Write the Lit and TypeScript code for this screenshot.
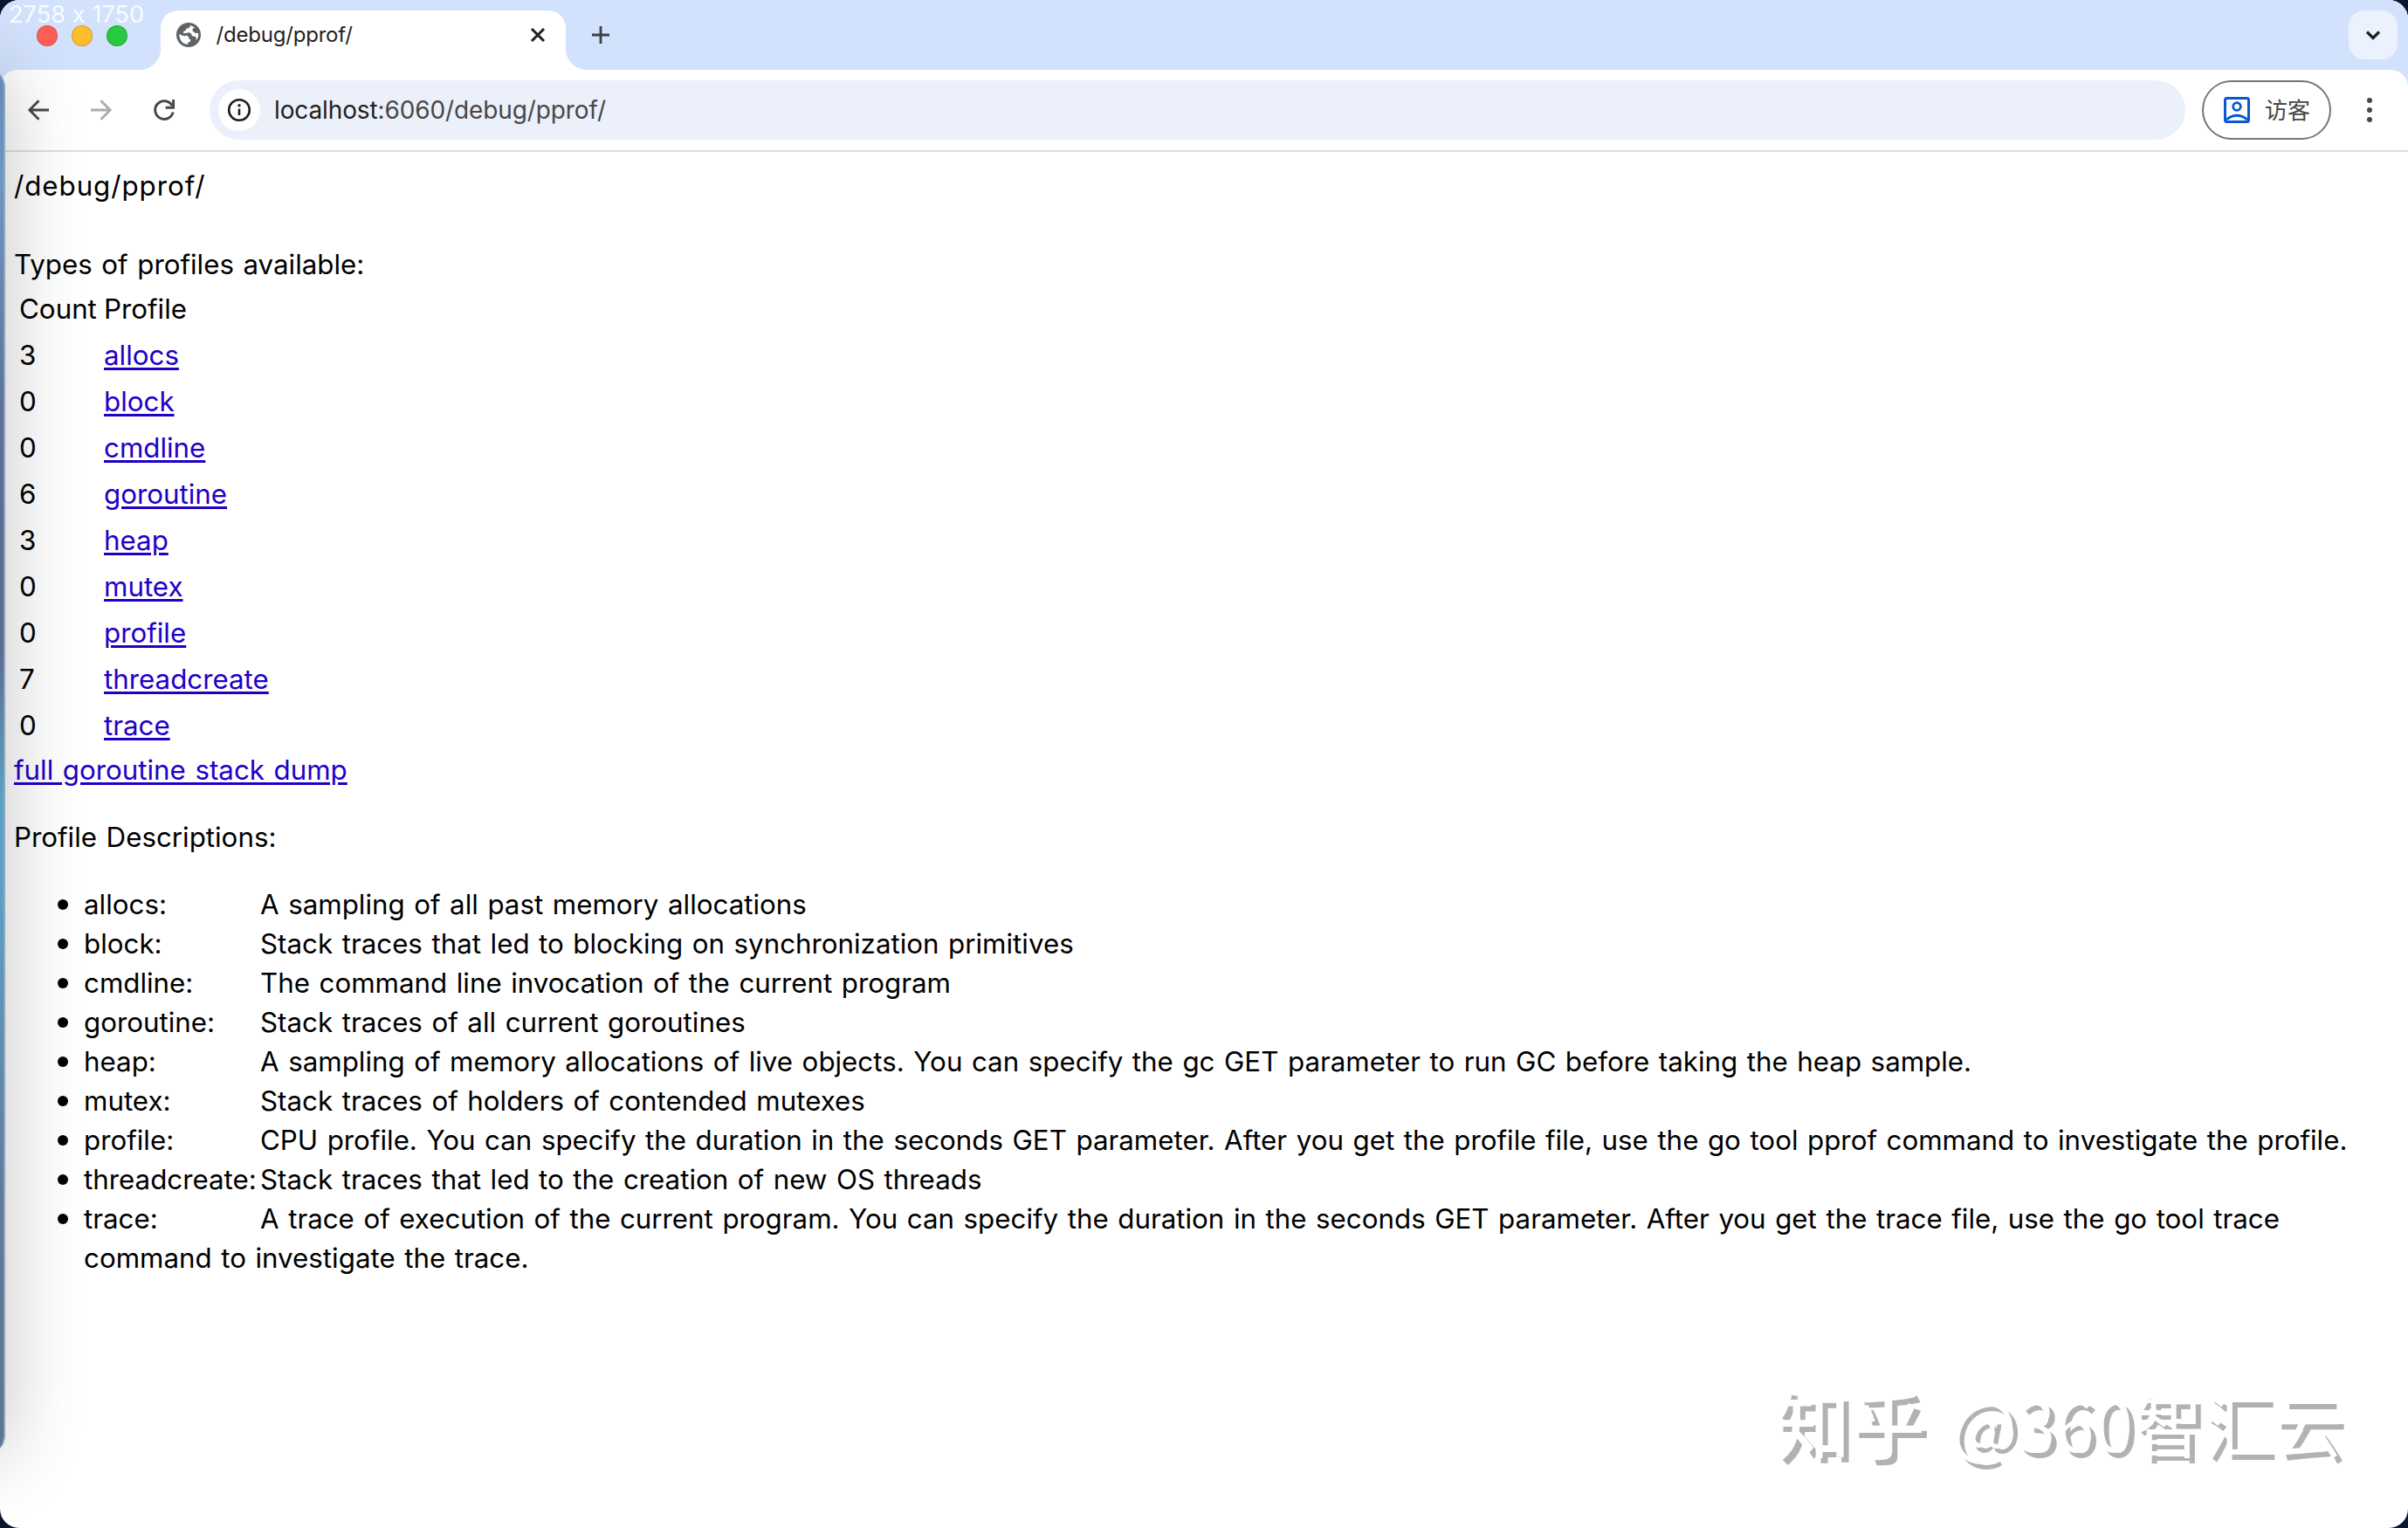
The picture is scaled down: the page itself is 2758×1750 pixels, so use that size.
import { LitElement, html, css, svg } from "lit";
import { customElement } from "lit/decorators.js";

const profiles: [string, string, string][] = [
  ["allocs", "3", "A sampling of all past memory allocations"],
  ["block", "0", "Stack traces that led to blocking on synchronization primitives"],
  ["cmdline", "0", "The command line invocation of the current program"],
  ["goroutine", "6", "Stack traces of all current goroutines"],
  ["heap", "3", "A sampling of memory allocations of live objects. You can specify the gc GET parameter to run GC before taking the heap sample."],
  ["mutex", "0", "Stack traces of holders of contended mutexes"],
  ["profile", "0", "CPU profile. You can specify the duration in the seconds GET parameter. After you get the profile file, use the go tool pprof command to investigate the profile."],
  ["threadcreate", "7", "Stack traces that led to the creation of new OS threads"],
  ["trace", "0", "A trace of execution of the current program. You can specify the duration in the seconds GET parameter. After you get the trace file, use the go tool trace command to investigate the trace."],
];

const icon = (size: number, body: unknown) =>
  html`<svg width=${size} height=${size} viewBox="0 0 ${size} ${size}" fill="none">${body}</svg>`;

@customElement("browser-tabs")
class BrowserTabs extends LitElement {
  static styles = css`
    :host { display: flex; height: 80px; box-sizing: border-box; padding: 12px 12px 0 42px; background: #d3e2fc; }
    .lights { display: flex; gap: 16px; padding-top: 17px; width: 142px; }
    .light { width: 24px; height: 24px; border-radius: 50%; box-sizing: border-box; border: 1px solid rgba(0, 0, 0, 0.16); }
    .red { background: #ff5f57; }
    .yellow { background: #febc2e; }
    .green { background: #28c840; }
    .tab { position: relative; display: flex; align-items: center; width: 464px; height: 68px; box-sizing: border-box; padding: 0 22px 12px 18px; background: #fff; border-radius: 20px 20px 0 0; }
    .tab::before, .tab::after { content: ""; position: absolute; bottom: 0; width: 24px; height: 24px; }
    .tab::before { right: 100%; background: radial-gradient(circle at 0 0, transparent 23.5px, #fff 24.5px); }
    .tab::after { left: 100%; background: radial-gradient(circle at 100% 0, transparent 23.5px, #fff 24.5px); }
    .title { flex: 1; padding-left: 17.5px; font: 24px/30px Inter, sans-serif; color: #1f1f1f; letter-spacing: -0.2px; }
    .new { padding: 16px 0 0 28px; }
    .search { margin-left: auto; width: 56px; height: 56px; border-radius: 18px; background: #ebf1fd; display: flex; align-items: center; justify-content: center; }
    svg { display: block; }
  `;
  render() {
    return html`
      <div class="lights"><i class="light red"></i><i class="light yellow"></i><i class="light green"></i></div>
      <div class="tab">
        ${icon(28, svg`<circle cx="14" cy="14" r="14" fill="#5f6368"/><path d="M3 13 Q7.5 16 12 14.8 Q14.5 15.5 14 18 Q17 18.5 16 21.5 Q13 22 12.8 25 Q4 24 3 13Z M15.5 3 Q16.5 5.5 13.5 6.2 Q10.5 6.5 10.8 9 Q8 9.2 7.6 11.6 Q9 12.6 12.5 11.4 Q17 10.8 17.6 14.4 Q18.5 16 21.5 15.8 Q23.4 17 22.8 20.2 Q26 16.5 25 11.8 Q21.5 12.8 20 10.4 Q18.2 10 18.4 8 Q18.8 6.4 21 5.6 Q18.5 3.6 15.5 3Z" fill="#fff"/>`)}
        <span class="title">/debug/pprof/</span>
        ${icon(20, svg`<path d="M3 3 L17 17 M17 3 L3 17" stroke="#1f1f1f" stroke-width="3"/>`)}
      </div>
      <div class="new">${icon(24, svg`<path d="M12 2 V22 M2 12 H22" stroke="#3c4043" stroke-width="2.8"/>`)}</div>
      <div class="search">${icon(20, svg`<path d="M3 6.5 L10 13.5 L17 6.5" stroke="#1f1f1f" stroke-width="3.2"/>`)}</div>
    `;
  }
}

@customElement("browser-toolbar")
class BrowserToolbar extends LitElement {
  static styles = css`
    :host { display: flex; align-items: center; height: 94px; box-sizing: border-box; padding: 0 28px 0 30px; background: #fff; border-radius: 20px 20px 0 0; border-bottom: 2px solid #dedfe0; }
    svg { display: block; }
    .nav { display: flex; gap: 44px; align-items: center; width: 210px; }
    .box { display: flex; align-items: center; width: 2263px; height: 68px; border-radius: 34px; background: #ebf0fa; box-sizing: border-box; padding-left: 10px; }
    .info { display: flex; align-items: center; justify-content: center; width: 48px; height: 48px; border-radius: 50%; background: #fff; }
    .url { padding-left: 16px; font: 28px/36px Inter, sans-serif; letter-spacing: -0.12px; color: #474747; }
    .host { color: #1f1f1f; }
    .guest { display: flex; align-items: center; gap: 16px; margin-left: 19px; width: 148px; height: 68px; box-sizing: border-box; border: 2px solid #747775; border-radius: 34px; padding-left: 22px; font: 26px/36px "Noto Sans CJK SC", sans-serif; color: #474747; }
    .label { padding-bottom: 2px; }
    .menu { margin-left: auto; }
  `;
  render() {
    return html`
      <div class="nav">
        ${icon(28, svg`<path d="M26 14 H4 M14.5 3.2 L3.8 14 L14.5 24.8" stroke="#474747" stroke-width="2.8"/>`)}
        ${icon(28, svg`<path d="M2 14 H24 M13.5 3.2 L24.2 14 L13.5 24.8" stroke="#ababab" stroke-width="2.8"/>`)}
        ${icon(28, svg`<path d="M23.2 9 A10.4 10.4 0 1 0 24.2 16.5" stroke="#474747" stroke-width="2.9"/><path d="M24.6 2 V11.2 H15.6" stroke="#474747" stroke-width="2.9"/>`)}
      </div>
      <div class="box">
        <span class="info">${icon(28, svg`<circle cx="14" cy="14" r="11.8" stroke="#1f1f1f" stroke-width="2.6"/><path d="M14 12.6 V20" stroke="#1f1f1f" stroke-width="2.6"/><circle cx="14" cy="8.8" r="1.7" fill="#1f1f1f"/>`)}</span>
        <span class="url"><span class="host">localhost</span>:6060/debug/pprof/</span>
      </div>
      <div class="guest">
        ${icon(32, svg`<rect x="2.5" y="2.5" width="27" height="27" rx="2" stroke="#0b57d0" stroke-width="3"/><circle cx="16" cy="12" r="4.3" stroke="#0b57d0" stroke-width="2.8"/><path d="M4 27 Q16 17.5 28 27" stroke="#0b57d0" stroke-width="2.8"/>`)}
        <span class="label">访客</span>
      </div>
      <div class="menu">${icon(32, svg`<circle cx="16" cy="5" r="3" fill="#474747"/><circle cx="16" cy="16" r="3" fill="#474747"/><circle cx="16" cy="27" r="3" fill="#474747"/>`)}</div>
    `;
  }
}

@customElement("pprof-page")
class PprofPage extends LitElement {
  static styles = css`
    :host { display: block; padding: 17px 16px 16px; font: 31.3px/45px Inter, sans-serif; word-spacing: 1.75px; color: #000; }
    .path { letter-spacing: 0.95px; }
    .gap { height: 45px; }
    table { border-spacing: 4px; border-collapse: separate; }
    td { padding: 2px; }
    .count { width: 89px; }
    a { color: #1f00c8; text-decoration: underline; text-decoration-thickness: 3px; text-underline-offset: 3px; }
    p { margin: 32px 0; }
    ul { margin: 0; padding: 0 0 0 80px; list-style: none; }
    li::before { content: ""; display: inline-block; width: 12px; height: 12px; margin: 0 18px 0 -30px; border-radius: 50%; background: #000; vertical-align: 5px; }
    .name { display: inline-block; width: 202px; white-space: nowrap; }
  `;
  render() {
    return html`
      <div class="path">/debug/pprof/</div>
      <div class="gap"></div>
      <div>Types of profiles available:</div>
      <table>
        <tr><td class="count">Count</td><td>Profile</td></tr>
        ${profiles.map(([n, c]) => html`<tr><td>${c}</td><td><a href="#">${n}</a></td></tr>`)}
      </table>
      <a href="#">full goroutine stack dump</a>
      <p>Profile Descriptions:</p>
      <ul>${profiles.map(([n, , d]) => html`<li><span class="name">${n}:</span>${d}</li>`)}</ul>
    `;
  }
}

@customElement("app-root")
class AppRoot extends LitElement {
  static styles = css`
    :host { display: block; width: 2758px; height: 1750px; background: #0a1630; overflow: hidden; position: relative; }
    .window { height: 1750px; border-radius: 22px; overflow: hidden; background: #fff; }
    .top { background: #d3e2fc; }
    .behind { position: absolute; left: -300px; top: 78px; width: 306px; height: 1588px; box-sizing: border-box; border-radius: 22px; border-right: 2px solid rgba(150, 170, 195, 0.8); background: linear-gradient(#6488b5 0, #6e97c2 8%, #5c6f95 26%, #5d6c90 42%, #5aa3c4 53%, #5d9cc0 62%, #62799a 82%, #5d7590 100%); box-shadow: 0 0 90px rgba(0, 0, 0, 0.24); }
    .size { position: absolute; left: 10px; top: 0; font: 27.2px/34px Inter, sans-serif; font-feature-settings: "calt" 0; color: rgba(255, 255, 255, 0.88); }
    .mark { position: absolute; left: 2031px; top: 1570px; display: flex; font: 80px/116px "Noto Sans CJK SC", sans-serif; color: #fff; text-shadow: 6px 6px 0 #b2b2b2; white-space: nowrap; }
    .logo { width: 201px; padding-left: 2px; font-size: 86px; font-weight: 500; }
  `;
  render() {
    return html`
      <div class="window">
        <div class="top"><browser-tabs></browser-tabs><browser-toolbar></browser-toolbar></div>
        <pprof-page></pprof-page>
      </div>
      <div class="behind"></div>
      <div class="size">2758 x 1750</div>
      <div class="mark"><span class="logo">知乎</span><span>@360智汇云</span></div>
    `;
  }
}
